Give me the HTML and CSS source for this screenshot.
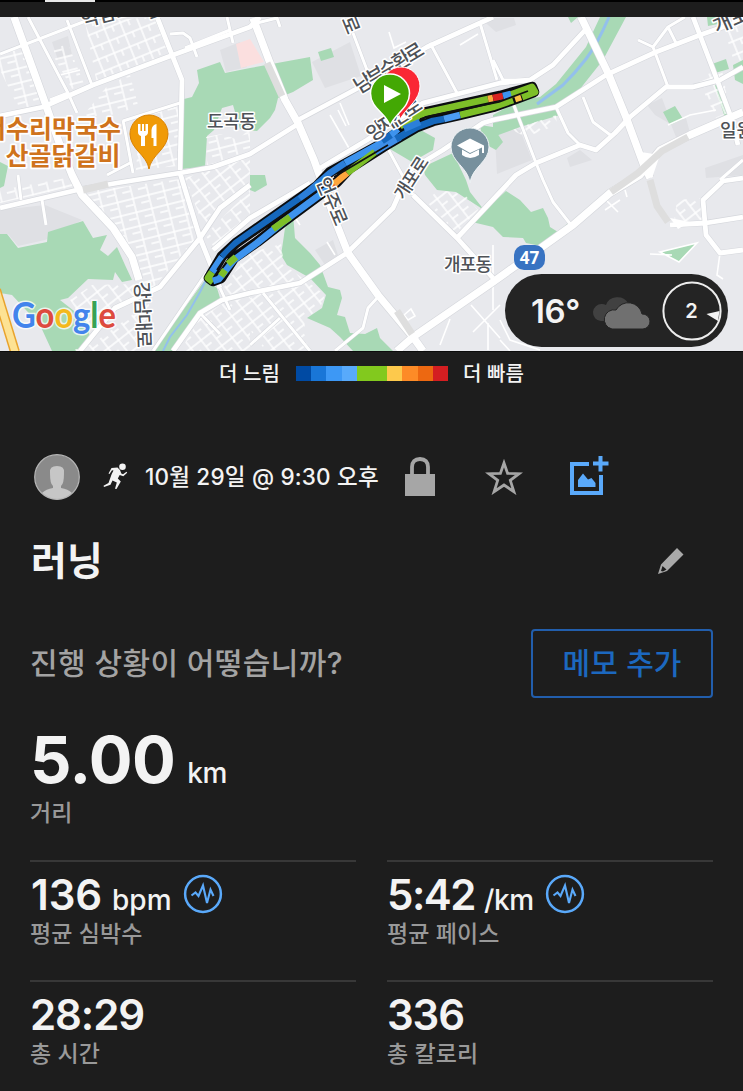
FILE: index.html
```html
<!DOCTYPE html>
<html lang="ko">
<head>
<meta charset="utf-8">
<title>러닝</title>
<link rel="stylesheet" href="styles.css">
</head>
<body>
<main class="screen">
  <div class="tabs"><span class="tab-indicator"></span></div>
  <section class="map">
    <svg class="map-canvas" viewBox="0 17 743 334" width="743" height="334">
      <defs>
        <pattern id="blocks" width="17" height="13" patternUnits="userSpaceOnUse" patternTransform="rotate(-22)">
          <path class="lane" d="M0 1H17M1 0V13M9 1V7"/>
        </pattern>
        <pattern id="blocks-west" width="16" height="14" patternUnits="userSpaceOnUse" patternTransform="rotate(-14)">
          <path class="lane" d="M0 1H16M1 0V14M8 7H16"/>
        </pattern>
        <pattern id="blocks-south" width="13" height="17" patternUnits="userSpaceOnUse" patternTransform="rotate(-38)">
          <path class="lane" d="M0 1H13M1 0V17M1 9H8"/>
        </pattern>
        <path id="road-small" d="M28 17L68 93 77 113M67 20L92 85M0 54L83 22 102 17M170 34L183 33 190 38 197 57M227 17L233 43M123 120L133 173M123 121L180 103M107 175L130 163M18 175L21 200M42 200L46 225M353 33L367 70M430 43L457 93M480 23L497 80M493 60L503 80 530 80M556 107L568 133 580 145M583 97L593 122 613 137M638 40L653 47 668 87M653 47L668 27 685 17M668 27L676 43M335 351L363 328 368 308 378 297M263 293L310 351M280 318L250 345M513 103L536 163 543 180 553 202 571 225M153 351L207 272M387 147L413 195M50 100L68 93M185 48L230 30M257 23L277 18 280 27M220 288L230 310M200 313L220 334M720 180L743 160"/>
        <path id="road-medium" d="M0 116L43 107 93 85 173 55 250 27 260 17M157 17L182 80 180 170M298 120L360 87 427 47 480 23 493 17M298 124L250 154 213 167 180 173 117 183 77 190 0 208M317 170L367 140 423 103 500 83 530 80 553 65 587 28M250 185L220 208 200 238 160 287 115 308 80 351M213 250L250 218 310 183M180 173L200 238 220 288M173 351L200 313 222 300 250 293 300 283 347 253 393 208 410 170 443 150 483 123 493 120 556 107 606 75 656 52 700 35 743 20M413 195L457 238 493 278M457 238L516 175 536 163 580 145 596 150 615 133 630 117 666 87 693 87 720 80 743 67M693 17L716 77 731 117 738 145M743 178L723 181 703 200 706 235 720 253 743 250M670 225L706 223 743 217"/>
        <path id="road-large" d="M14 17L43 97 60 145 72 175 82 195 113 228 132 257 139 280M253 18L270 63 285 100 298 123 314 160 337 225 348 253 378 295 413 337M397 351L413 337 493 282 573 225 610 193 640 175 660 150 690 135 743 112M581 17L608 73 626 117 643 163 650 178M413 337L423 351"/>
      </defs>
      <rect y="17" width="743" height="334" fill="#e8e9ed"/>
      <path fill="#dfe0e4" d="M52 42L68 36 72 55 58 60ZM312 62L350 42 361 76 325 88ZM220 50L240 42 247 67 226 72ZM647 105L662 98 672 125 655 115ZM670 122L686 118 692 140 676 137ZM567 158L580 150 592 160 570 167ZM0 210L45 205 82 220 45 240 18 246 8 234 0 234ZM705 168L743 155V175L706 178ZM315 250L333 240 338 255 325 265ZM480 18L514 18 516 25 496 32ZM494 120L520 130 532 160 497 174Z"/>
      <path fill="#fbdfdf" d="M236 44L250 39 264 62 241 68Z"/>
      <g fill="#a8d9b5">
        <path d="M197 70L220 62 225 73 250 68 310 57 313 80 293 92 278 98 275 110 270 118 257 131 240 129 233 105 222 108 214 130 207 136 205 167 181 169 184 99 192 97 199 83Z"/>
        <path d="M318 52L331 48 334 57 321 61Z"/>
        <path d="M0 234H7L18 248 47 242 48 232 83 221 93 238 107 235 100 250 108 256 117 247 125 265 132 280 122 282 115 272 113 280 88 279 68 298 60 300 88 322 90 342 77 351H52L40 325 12 295 0 293Z"/>
        <path d="M0 162L8 166 4 186 0 188Z"/>
        <path d="M205 280L217 288 220 298 200 313 173 351H153Z"/>
        <path d="M285 228L293 214 295 238 310 253 320 265 328 287 340 290 342 298 337 315 345 317 350 333 365 334 377 328 380 338 393 351H353L340 337 330 328 307 318 322 308 326 295 310 278 287 265 281 255 283 242Z"/>
        <path d="M250 175H265L267 185 255 192 250 190Z"/>
        <path d="M390 149L417 128 435 138 433 150 412 162Z"/>
        <path d="M423 167L453 153 466 180 470 192 484 210 456 192 437 190 425 175Z"/>
        <path d="M483 212L506 191 520 200 531 212 543 208 548 218 550 227 558 232 568 223V228L541 246 526 243 523 238 503 237 493 227 472 222Z"/>
        <path d="M480 125L493 127 503 142 496 150 483 143Z"/>
        <path d="M626 17L603 60 576 94 556 107 560 115 520 127 493 137V115L520 100 540 97 556 84 586 47 600 17Z"/>
        <path d="M568 17H578L571 23ZM712 64L726 59 729 69 715 73ZM733 65L743 60V84L735 80ZM663 112L675 106 683 119 670 125ZM660 252L697 243 679 262ZM707 17H718V24L708 26Z"/>
      </g>
      <path fill="none" stroke="#a8d9b5" stroke-width="3" d="M694 134L726 116 716 85"/>
      <g fill="none" stroke="#93c0ec" stroke-width="3">
        <path d="M609 17Q597 45 586 59T563 85L537 104"/>
        <path stroke-width="2" d="M206 280L200 292 187 315 180 324 170 337 163 351"/>
      </g>
      <path fill="url(#blocks)" d="M85 22L157 17 173 55 97 84ZM697 77L722 70 730 112 716 118ZM725 32L743 24V60L734 62Z"/>
      <path fill="url(#blocks-west)" d="M0 55L27 45 46 103 20 111 0 70ZM50 50L68 44 84 84 72 89ZM108 85L130 75 138 105 120 114 82 117ZM85 192L180 179 198 236 146 296 140 277 112 225ZM0 190L72 177 76 186 0 203ZM206 137L222 134 238 140 250 128V150L207 166ZM140 118L178 106 178 166 136 170Z"/>
      <path fill="url(#blocks-south)" d="M185 178L250 157V180L204 228ZM92 285L133 284 150 296 116 306 88 330 70 300ZM250 253L281 244 284 265 308 282 325 295 320 308 304 320 308 350H265L250 330V298L262 293 250 285ZM205 235L250 190V214L214 247ZM222 290L250 250V290L225 300ZM425 200L440 190 465 195 478 210 456 233ZM512 130L556 115 557 125 526 137ZM677 200L703 198 704 220 674 222ZM200 318L224 303 250 297V351H180ZM70 351L92 344 150 302 139 351Z"/>
      <g fill="none" stroke="#fff" stroke-width="1.6">
        <path d="M471 305L500 338M500 305L473 332M488 323V350M450 319L440 345M404 315L411 309 415 316 408 320ZM389 32L394 48 406 42M330 115L350 150M340 103L349 125M605 210L620 200M607 201L618 212M625 190L627 197M650 254L672 255M660 252L697 243 679 262ZM720 253L717 275 723 279M493 245V310M500 320L510 340 540 350M60 75L80 70M668 125L690 115 716 110M327 242L335 255M300 225L290 210M346 126L338 110M460 45L478 34M500 340L510 351"/>
      </g>
      <g class="road-case">
        <use class="r3" href="#road-small"/><use class="r5" href="#road-medium"/><use class="r8" href="#road-large"/>
      </g>
      <g class="road">
        <use class="r3" href="#road-small"/><use class="r5" href="#road-medium"/><use class="r8" href="#road-large"/>
      </g>
      <path fill="#fff" d="M641 152L660 155 652 178 640 168ZM670 218L690 222 678 229Z"/>
      <path fill="none" stroke="#dedede" stroke-width="7" d="M267 63L282 96M397 311L412 334M611 192L638 173 662 151 688 137M650 180L657 206 668 222M83 190L108 184"/>
      <path fill="none" stroke="#e9a32c" stroke-width="10" d="M-4 290L15 352"/>
      <path fill="none" stroke="#fde293" stroke-width="7" d="M-4 290L15 352"/>

      <g class="map-label">
        <text font-size="19" transform="translate(83 27) rotate(-14)">역삼로</text>
        <text font-size="19" transform="translate(150 20) rotate(-20)">로</text>
        <text font-size="19" transform="translate(350 25) rotate(68)" text-anchor="middle" y="6">로</text>
        <text font-size="18" x="207" y="128" textLength="49">도곡동</text>
        <text font-size="18" x="444" y="271" textLength="48">개포동</text>
        <text font-size="18" x="720" y="137">일원동</text>
        <text font-size="20" transform="translate(717 34) rotate(-24)">개포로</text>
        <text font-size="20" transform="translate(359 94) rotate(-31)" textLength="78">남부순환로</text>
        <text font-size="18" transform="translate(404 201) rotate(-57)" textLength="47">개포로</text>
        <text font-size="19" transform="translate(135 282) rotate(88)" textLength="66">강남대로</text>
      </g>

      <path fill="none" stroke-linejoin="round" stroke="#0b0d10" stroke-width="10.5" d="M209 278L222 256 236 243 317 186 330 172 383 143 423 113 500 96 532 87 534 92 518 98 493 107 460 115 433 121 417 127 383 147 350 168 337 182 283 222 257 242 234 258 221 278 213 281Z"/>
      <g fill="none" stroke-width="6.8" stroke-linejoin="round">
        <path stroke="#7dbf28" d="M213 282L208 278 212 272M400 126L424 113 488 99M510 95L532 87 535 92 522 97M513 100L493 107 460 115"/>
        <path stroke="#3d93ee" d="M212 272L222 257M213 281L219 279 234 260 257 243 283 222 337 182M345 163L383 142 398 129"/>
        <path stroke="#1668bd" d="M222 257L236 243 320 184"/>
        <path stroke="#2c7fd9" d="M300 199L330 173 345 163"/>
        <path stroke="#7dbf28" d="M221 276L225 270M228 264L236 257M273 229L290 217M347 173L375 152"/>
        <path stroke="#fda63d" d="M333 185L347 173"/>
        <path stroke="#f06020" d="M331 187L334 184"/>
        <path stroke="#3f8fe9" d="M375 152L383 147 400 137"/>
        <path stroke="#1668bd" d="M396 139L417 127 433 121 444 119M382 141L391 135"/>
        <path stroke="#2c7fd9" d="M404 129L420 122"/>
        <path stroke="#4c9df3" d="M444 119L460 115"/>
        <path stroke="#faaa3d" d="M488 99L493 98"/><path stroke="#d92320" d="M493 98L503 96"/><path stroke="#3d93ee" d="M503 96L511 94"/><path stroke="#fbc04a" d="M515 99L521 97"/>
      </g>
      <path d="M217 270Q228 251 248 239L320 189M334 177L388 145M420 119L430 116 499 102 528 91" fill="none" stroke="#111" stroke-width="1.8"/>

      <g class="map-label">
        <text font-size="19" transform="translate(316 181) rotate(67)" textLength="50">언주로</text>
        <text font-size="20" transform="translate(372 142) rotate(-33)" textLength="62">양재천로</text>
      </g>

      <path fill="#fa2734" stroke="#fff" stroke-width="1" d="M400 119C399 108 382 102 382 86A18.5 18.5 0 0 1 420 86C420 100 408 106 400 119Z"/>
      <path fill="#43a804" stroke="#fff" stroke-width="1.5" d="M390 126C387 113 370.500 109 370.500 93.500A19.500 19.500 0 0 1 409.500 93.500C409.500 108 394 114 390 126Z"/>
      <path fill="#fff" d="M384 85L401 94 384 103Z"/>
      <path fill="#77909d" stroke="#eef3f5" stroke-width="1" d="M470 183C468 167 451 162 451 147A19 19 0 0 1 489 147C489 162 472 167 470 183Z"/>
      <path fill="#fff" d="M457 145.500L470 138.500 484 145.500V153H482V147.500L470 153ZM462 149.500L470 154 479 149.500V155Q470 161 462 155Z"/>
      <path fill="#f09a07" stroke="#d98204" stroke-width="1" d="M149 169C147 155 130 149 130 134A19 19 0 0 1 168 134C168 149 151 155 149 169Z"/>
      <path fill="#fff" d="M138 124h2.500v7h1.500v-7h2v7h1.500v-7h2.500v8q0 3-3 4v10h-4v-10q-3-1-3-4ZM156.500 124V146H153.500V138H151.500V130Q152 125 156.500 124Z"/>
      <g class="poi">
        <text x="121" y="138" text-anchor="end">너수리막국수</text>
        <text x="120.500" y="165" text-anchor="end">산골닭갈비</text>
      </g>
      <rect x="514" y="245" width="31" height="25" rx="10" fill="#3873c2"/>
      <text class="route-no" x="529.500" y="264" text-anchor="middle">47</text>
      <text class="google" x="12" y="328" textLength="104" lengthAdjust="spacingAndGlyphs"><tspan fill="#4384ec">G</tspan><tspan fill="#dd4b3e">o</tspan><tspan fill="#f4b91d">o</tspan><tspan fill="#4384ec">g</tspan><tspan fill="#37a255">l</tspan><tspan fill="#dd4b3e">e</tspan></text>
    </svg>
    <aside class="weather">
      <span class="temperature">16°</span>
      <svg class="clouds" width="60" height="34" viewBox="0 0 60 34">
        <path fill="#414141" d="M9 26A8.500 8.500 0 0 1 10 9Q12 9 14 10A12 11 0 0 1 36 8L28 26Z"/>
        <path fill="#707070" stroke="#242424" stroke-width="1" d="M20 34A9.500 9.500 0 0 1 24 15A14 14 0 0 1 50 19A7.500 7.500 0 0 1 51 34Z"/>
      </svg>
      <svg class="wind" width="60" height="60" viewBox="0 0 60 60">
        <circle cx="30" cy="30" r="28.600" fill="none" stroke="#ededed" stroke-width="2"/>
        <path fill="#f2f2f2" d="M44.500 33L57.500 30 56 40Z"/>
        <text x="29.500" y="37" text-anchor="middle">2</text>
      </svg>
    </aside>
  </section>

  <section class="legend">
    <span>더 느림</span>
    <div class="scale"><i class="s1"></i><i class="s2"></i><i class="s3"></i><i class="s4"></i><i class="s5"></i><i class="s5"></i><i class="s6"></i><i class="s7"></i><i class="s8"></i><i class="s9"></i></div>
    <span>더 빠름</span>
  </section>

  <section class="meta">
    <svg class="avatar" width="46" height="46" viewBox="0 0 46 46">
      <circle cx="23" cy="23" r="22.300" fill="#8a8a8a"/>
      <path fill="#c6c6c6" d="M16 19Q15 12 23 12T30 19Q30 30 27 32V34Q34 35 38 39Q31 45.500 23 45.500T8 39Q12 35 19 34V32Q16 30 16 19Z"/>
      <circle cx="23" cy="23" r="22.300" fill="none" stroke="#b5b5b5" stroke-width="1.200"/>
    </svg>
    <svg class="runner" width="25" height="27" viewBox="0 0 25 27">
      <circle cx="19.500" cy="3.800" r="3.300" fill="#f3f3f3"/>
      <path fill="#f3f3f3" d="M8.500 5L14.500 4.500 17 7 18.300 10.500 20 11.300 23.500 8.800 24.200 9.800 20.300 13.200 16.700 12 14.800 15.500 17.800 18.500 13.500 26 12 25.700 13.800 19.500 9.500 17.500 7.500 21.800 1 24 0.500 22.800 5.500 20 8.700 11 10.500 7.500 9 7.200 6.500 11 5.500 10.500Z"/>
    </svg>
    <time class="date">10월 29일 @ 9:30 오후</time>
    <svg class="lock" width="30" height="39" viewBox="0 0 30 39">
      <rect y="17" width="30" height="22" fill="#a6a6a6"/>
      <path d="M7 18V10Q7 2 15 2T23 10V18" fill="none" stroke="#a6a6a6" stroke-width="3.800"/>
    </svg>
    <svg class="star" width="38" height="36" viewBox="0 0 38 36">
      <path d="M19 4L22.600 14.400 34 14.700 25.300 21.300 28.900 32.700 19 26 9.100 32.700 12.700 21.300 4 14.700 15.400 14.400Z" fill="none" stroke="#a6a6a6" stroke-width="2.800"/>
    </svg>
    <svg class="add-image" width="39" height="39" viewBox="0 0 39 39">
      <path fill="none" stroke="#5aa9fa" stroke-width="4" d="M19 8H2V37H31V19M30.500 0V15.500M23 7.500H38.500"/>
      <path fill="#5aa9fa" d="M8 31V24L13 17.500 18 23.500 21.500 22 25.500 27V31Z"/>
    </svg>
  </section>

  <section class="title-row">
    <h1>러닝</h1>
    <svg class="pencil" width="26" height="27" viewBox="0 0 26 27">
      <path fill="#a9a9a9" fill-rule="evenodd" d="M19 0L25.500 6.500 9 23 0 26 3 16.500ZM4.500 18L3 23 5 23.500 8.500 21.500Z"/>
    </svg>
  </section>

  <section class="note-row">
    <p>진행 상황이 어떻습니까?</p>
    <button class="memo" type="button">메모 추가</button>
  </section>

  <section class="distance">
    <div class="big"><strong>5.00</strong><span>km</span></div>
    <div class="caption">거리</div>
  </section>

  <section class="stats">
    <article class="stat">
      <div class="value"><b class="plain">136</b><span class="unit">bpm</span>
        <svg class="pulse" width="40" height="40" viewBox="0 0 40 40"><circle cx="20" cy="20" r="17.900" fill="none" stroke="#5aa9fa" stroke-width="2.500"/><path d="M8.500 21.500L12.500 18.500 15.500 22 20 11.500 24 29 27.500 15.500 30.500 22" fill="none" stroke="#5aa9fa" stroke-width="2.100"/></svg>
      </div>
      <div class="caption">평균 심박수</div>
    </article>
    <article class="stat">
      <div class="value"><b class="pace">5:42</b><span class="unit unit-pace">/km</span>
        <svg class="pulse" width="40" height="40" viewBox="0 0 40 40"><circle cx="20" cy="20" r="17.900" fill="none" stroke="#5aa9fa" stroke-width="2.500"/><path d="M8.500 21.500L12.500 18.500 15.500 22 20 11.500 24 29 27.500 15.500 30.500 22" fill="none" stroke="#5aa9fa" stroke-width="2.100"/></svg>
      </div>
      <div class="caption">평균 페이스</div>
    </article>
    <article class="stat">
      <div class="value"><b>28:29</b></div>
      <div class="caption">총 시간</div>
    </article>
    <article class="stat">
      <div class="value"><b>336</b></div>
      <div class="caption">총 칼로리</div>
    </article>
  </section>
</main>
</body>
</html>
```

FILE: styles.css
```css
* { box-sizing: border-box; }
body {
  margin: 0;
  background: #1d1d1d;
  color: #f3f3f3;
  font-family: Inter, "Noto Sans CJK KR", sans-serif;
}
.screen { width: 743px; height: 1091px; overflow: hidden; background: #1d1d1d; }
svg { display: block; flex: none; }

.tabs { height: 17px; padding-left: 45px; border-top: 2px solid #000; }
.tab-indicator { display: block; width: 50px; height: 2px; margin-top: -2px; background: #e9e9e9; }

.map { position: relative; height: 334px; }
.lane { fill: none; stroke: #fff; stroke-width: 1.4; }
.road-case, .road { fill: none; stroke-linejoin: round; }
.road-case { stroke: #d5d7dc; }
.road { stroke: #fff; }
.road-case .r3 { stroke-width: 4; }
.road-case .r5 { stroke-width: 6; }
.road-case .r8 { stroke-width: 8.600; }
.road .r3 { stroke-width: 3; }
.road .r5 { stroke-width: 4.800; }
.road .r8 { stroke-width: 7.400; }
.map-label text {
  font-family: "Noto Sans CJK KR", sans-serif;
  font-weight: 500;
  fill: #4e5257;
  stroke: #fff;
  stroke-width: 3px;
  stroke-linejoin: round;
  paint-order: stroke;
}
.poi text {
  font-family: "Noto Sans CJK KR", sans-serif;
  font-size: 25px;
  font-weight: 700;
  fill: #cf731c;
  stroke: #fff;
  stroke-width: 3.500px;
  stroke-linejoin: round;
  paint-order: stroke;
}
.route-no { font: 700 17px "Open Sans", sans-serif; fill: #fff; }
.google {
  font: 700 36px Lato, sans-serif;
  stroke: rgba(255, 255, 255, .75);
  stroke-width: 3px;
  paint-order: stroke;
}

.weather {
  position: absolute;
  left: 505px;
  top: 257px;
  display: flex;
  align-items: center;
  width: 223px;
  height: 73px;
  padding-left: 26px;
  border-radius: 37px;
  background: #242424;
}
.temperature { width: 61px; padding-top: 2px; font-size: 33px; font-weight: 600; letter-spacing: -.4px; line-height: 73px; }
.clouds { margin-top: 3px; }
.wind { margin-left: 10px; }
.wind text { font: 600 20px Inter, sans-serif; fill: #f2f2f2; }

.legend {
  display: flex;
  align-items: center;
  height: 44px;
  padding-left: 219px;
  border-top: 1px solid #0c0c0c;
  font-family: "Noto Sans CJK KR", sans-serif;
  font-size: 20px;
  font-weight: 500;
  line-height: 30px;
}
.legend span { margin-top: -2px; }
.legend span:first-child { width: 77px; }
.scale { display: flex; width: 152px; height: 15px; margin-right: 15px; }
.scale i { flex: 1; }
.s1 { background: #004aa3; }
.s2 { background: #1976d7; }
.s3 { background: #3d98f5; }
.s4 { background: #58aafb; }
.s5 { background: #82c91e; }
.s6 { background: #fdc94c; }
.s7 { background: #fd8b27; }
.s8 { background: #ed6811; }
.s9 { background: #d41e21; }

.meta { display: flex; align-items: center; height: 163px; padding-left: 34px; }
.runner { margin: -1px 0 0 23px; }
.date { width: 260px; margin-left: 17px; font-size: 22.500px; font-weight: 500; line-height: 30px; letter-spacing: .2px; white-space: nowrap; }
.star { margin: 0 0 0 50px; }
.add-image { margin: -3px 0 0 47px; }

.title-row { display: flex; align-items: center; justify-content: space-between; height: 70px; padding: 0 59px 0 31px; margin-top: -32px; }
h1 { margin: 0; font-size: 39px; line-height: 60px; font-weight: 600; }

.note-row { display: flex; align-items: center; justify-content: space-between; height: 69px; margin-top: 33px; padding: 0 30px; }
.note-row p { margin: -6px 0 0; font-size: 30px; font-weight: 500; letter-spacing: .4px; color: #a3a3a3; }
.memo {
  width: 182px;
  height: 69px;
  padding: 0 0 5px;
  border: 2px solid #225eac;
  border-radius: 4px;
  background: none;
  color: #1c68bf;
  font: 500 30px "Noto Sans CJK KR", sans-serif;
}

.distance { height: 162px; padding: 27px 30px 0; }
.big { display: flex; align-items: baseline; height: 73px; padding-left: 0; line-height: 70px; }
.big strong { font-size: 65px; font-weight: 700; letter-spacing: -.6px; }
.big span { margin-left: 12px; font-size: 28px; font-weight: 500; letter-spacing: -.2px; }
.caption { font-size: 23px; font-weight: 500; line-height: 31px; letter-spacing: .1px; color: #999; }

.stats { display: grid; grid-template-columns: 326px 326px; grid-auto-rows: 120px; column-gap: 31px; padding: 0 30px; }
.stat { border-top: 2px solid #383838; }
.value { display: flex; align-items: baseline; height: 57px; line-height: 66px; white-space: nowrap; }
.value b { font-size: 42px; font-weight: 600; letter-spacing: -1.1px; }
.value .plain { margin-left: 1px; letter-spacing: -.1px; }
.value .pace { letter-spacing: -1.5px; }
.unit { margin-left: 10px; font-size: 28px; font-weight: 500; }
.unit-pace { margin-left: 9px; letter-spacing: -.4px; }
.pulse { align-self: flex-start; margin: 12px 0 0 11px; }
```
